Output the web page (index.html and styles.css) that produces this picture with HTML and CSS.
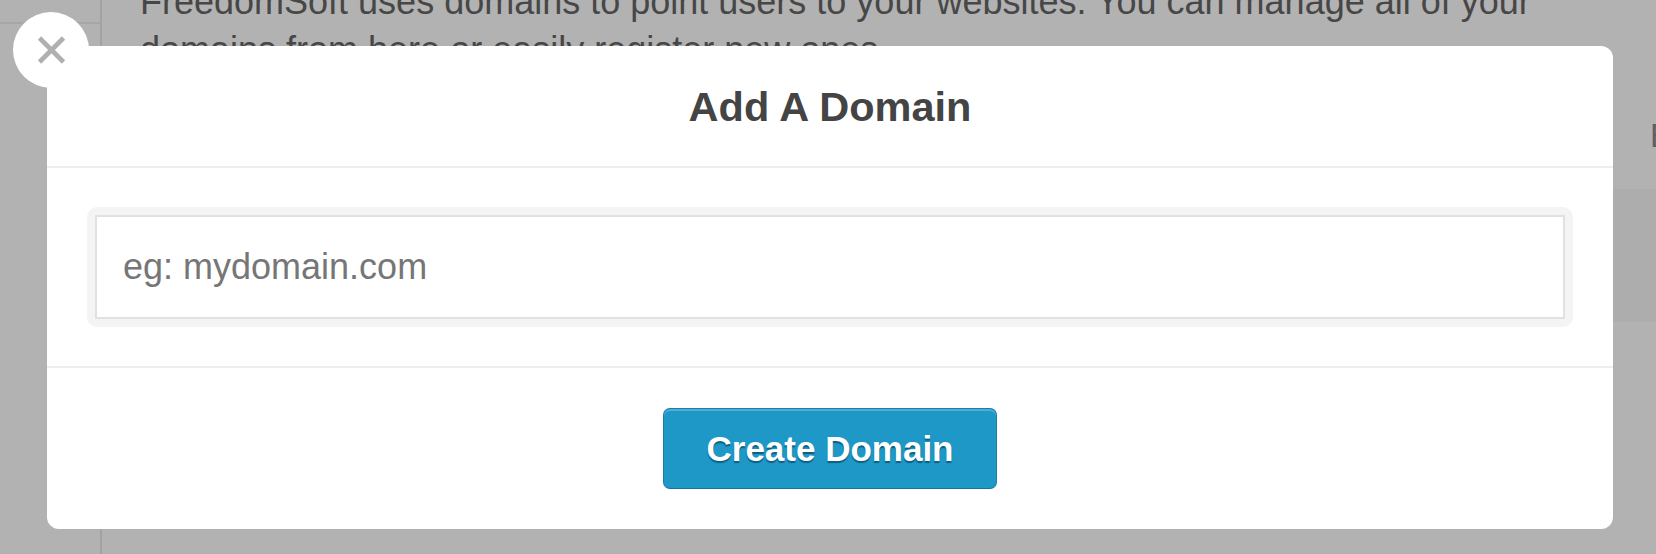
FILE: index.html
```html
<!DOCTYPE html>
<html lang="en">
<head>
<meta charset="utf-8">
<title>Add A Domain</title>
<link rel="stylesheet" href="styles.css">
</head>
<body>
<div class="page">
  <aside class="sidebar"><div class="sidebar-top"></div></aside>
  <main class="content">
    <p class="intro">FreedomSoft uses domains to point users to your websites. You can manage all of your domains from here or easily register new ones.</p>
    <div class="toolbar"><span class="toolbar-btn">Export</span></div>
    <div class="table-head"></div>
  </main>
</div>

<div class="overlay"></div>

<button class="close-btn" type="button" aria-label="Close">
  <svg width="29" height="28" viewBox="0 0 29 28" aria-hidden="true">
    <path d="M2.5 2 L26.5 26 M26.5 2 L2.5 26" stroke="#b0b0b0" stroke-width="4.6" fill="none"/>
  </svg>
</button>

<div class="modal">
  <div class="modal-header"><h2 class="modal-title">Add A Domain</h2></div>
  <div class="modal-body">
    <div class="field-wrap">
      <input class="field" type="text" placeholder="eg: mydomain.com">
    </div>
  </div>
  <div class="modal-footer">
    <button class="btn-primary" type="button">Create Domain</button>
  </div>
</div>
</body>
</html>
```
FILE: styles.css
```css
* { box-sizing: border-box; }

html, body {
  margin: 0;
  padding: 0;
  height: 100%;
  overflow: hidden;
}

body {
  background: #ffffff;
  font-family: "Liberation Sans", Arial, Helvetica, sans-serif;
  color: #666666;
}

.page {
  display: flex;
  height: 554px;
}

.sidebar {
  flex: 0 0 102px;
  border-right: 2px solid #e9e9e9;
}

.sidebar-top {
  height: 24px;
  border-bottom: 2px solid #efefef;
}

.content {
  flex: 1;
  min-width: 0;
}

.intro {
  margin: -22px 0 0 38px;
  max-width: 1420px;
  font-size: 36px;
  line-height: 48px;
  color: #666666;
}

.toolbar {
  height: 115px;
  padding: 45px 0 0 1548px;
  display: flex;
  align-items: flex-start;
  white-space: nowrap;
}

.toolbar-btn {
  font-size: 33px;
  line-height: 1;
  color: #8a8a8a;
}

.table-head {
  height: 133px;
  background: #f8f8f8;
}

.overlay {
  position: fixed;
  inset: 0;
  background: rgba(0, 0, 0, 0.3);
}

.modal {
  position: absolute;
  left: 47px;
  top: 46px;
  width: 1566px;
  background: #ffffff;
  border-radius: 12px;
  display: flex;
  flex-direction: column;
}

.modal-header {
  height: 122px;
  border-bottom: 2px solid #eeeeee;
  display: flex;
  align-items: center;
  justify-content: center;
}

.modal-title {
  margin: 0;
  font-size: 41.5px;
  font-weight: bold;
  color: #444444;
  line-height: 1;
  padding-top: 2px;
}

.modal-body {
  padding: 39px 40px;
  border-bottom: 2px solid #eeeeee;
}

.field-wrap {
  background: #f4f4f4;
  border-radius: 10px;
  padding: 8px;
}

.field {
  display: block;
  width: 100%;
  height: 104px;
  border: 2px solid #e1e1e1;
  background: #ffffff;
  padding: 0 0 0 26px;
  font-family: "Liberation Sans", Arial, Helvetica, sans-serif;
  font-size: 36px;
  color: #444444;
  outline: none;
}

.field::placeholder {
  color: #767676;
  opacity: 1;
}

.modal-footer {
  padding: 40px 0;
  display: flex;
  justify-content: center;
}

.btn-primary {
  height: 81px;
  padding: 0 42px;
  border: 1px solid #1a7fa8;
  border-bottom-color: #16759b;
  border-radius: 7px;
  background: #1e98c6;
  box-shadow: inset 0 2px 0 rgba(255, 255, 255, 0.22);
  font-family: "Liberation Sans", Arial, Helvetica, sans-serif;
  font-size: 35px;
  font-weight: bold;
  color: #ffffff;
  text-shadow: 0 2px 1px rgba(0, 55, 85, 0.6);
  cursor: pointer;
}

.close-btn {
  position: absolute;
  left: 13px;
  top: 12px;
  width: 76px;
  height: 76px;
  border: none;
  border-radius: 50%;
  background: #ffffff;
  padding: 0;
  display: flex;
  align-items: center;
  justify-content: center;
  cursor: pointer;
  z-index: 2;
}
```
